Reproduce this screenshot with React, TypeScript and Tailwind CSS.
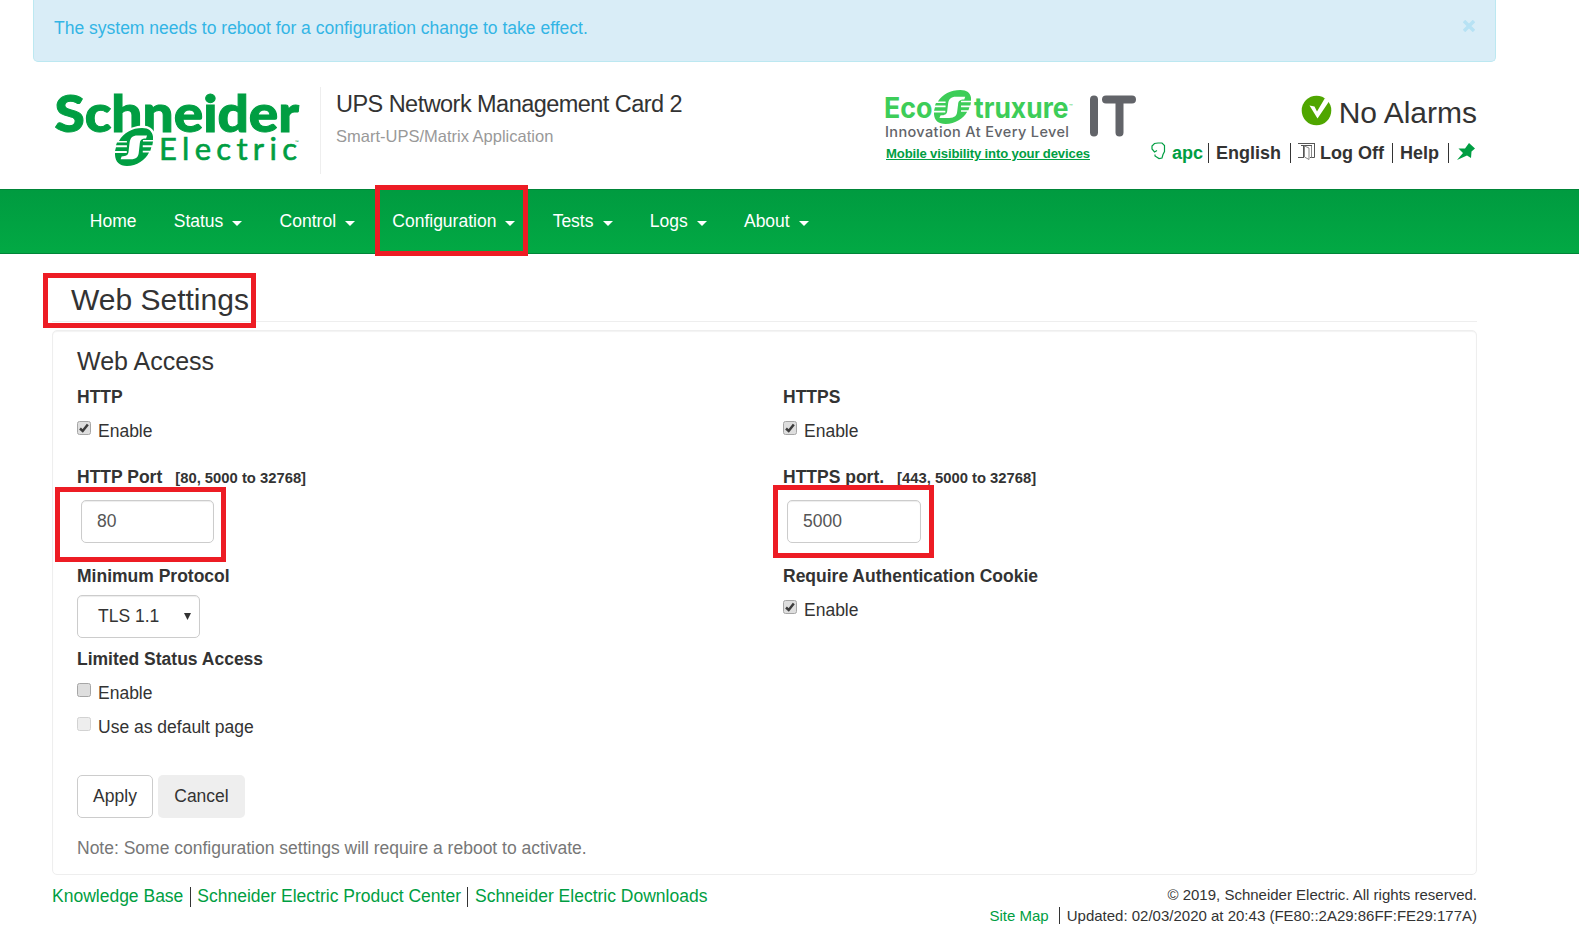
import React from 'react';

function Emblem({ x, y, w, h, color }: { x: number; y: number; w: number; h: number; color: string }) {
  return (
    <svg x={x} y={y} width={w} height={h} viewBox="0 0 115 112" preserveAspectRatio="none">
      <path
        fill={color}
        d="M12 38H40V43H6L3 51H38V57H3L0 68H36V74H0C-1 98 12 112 36 112C66 112 92 94 103 72H78V67H107L110 57H80V51H113L115 40H84V35H115C117 14 106 0 82 0C52 0 26 14 12 38Z"
      />
      <rect x="36" y="30" width="48" height="52" fill={color} />
      <path fill="#fff" d="M97 22H68C53 22 46 29 44 44L41 70C40 80 34 83 20 84L17 92H47C65 92 71 84 72 72L75 46C76 36 80 31 94 31Z" />
    </svg>
  );
}

function BrandLogo() {
  return (
    <svg width="248" height="78" viewBox="54 90 248 78" className="block shrink-0 overflow-visible" fontFamily="Lato, sans-serif">
      <text x="54.500" y="131.500" fontSize="51.500" fontWeight="900" fill="#009e42" stroke="#009e42" strokeWidth="1" textLength="244.500" lengthAdjust="spacingAndGlyphs">Schneider</text>
      <path d="M113 143C118 134 130 126 142 125.500C150 125.500 156 130 156 140L150 160H120Z" fill="#fff" />
      <Emblem x={115} y={128} w={38} h={38} color="#009e42" />
      <text x="159" y="160" fontSize="31" fill="#009e42" stroke="#009e42" strokeWidth="0.6" textLength="138" lengthAdjust="spacing">Electric</text>
      <text x="295" y="144" fontSize="5" fill="#009e42">™</text>
    </svg>
  );
}

function EcoLogo() {
  return (
    <svg width="252" height="52" viewBox="885 88 252 52" className="block overflow-visible" fontFamily="Inter, sans-serif">
      <g fill="#3dcd58" fontWeight="700" fontSize="28">
        <text x="884" y="117.500" textLength="48.500" lengthAdjust="spacingAndGlyphs">Eco</text>
        <text x="974" y="117.500" textLength="94.500" lengthAdjust="spacingAndGlyphs">truxure</text>
      </g>
      <text x="1069" y="109" fontSize="6" fill="#3dcd58">™</text>
      <Emblem x={934} y={90} w={37} h={34} color="#3dcd58" />
      <text x="885" y="137" fontSize="14.500" fontWeight="500" fill="#626469" textLength="184">Innovation At Every Level</text>
      <path d="M1094 99.500V132.500M1106 99.500H1132M1119.500 99.500V132.500" stroke="#626469" strokeWidth="8" strokeLinecap="round" fill="none" />
    </svg>
  );
}

function Box({ className = '' }: { className?: string }) {
  return <div className={'pointer-events-none absolute border-5 border-[#ed1c24] ' + className} />;
}

function Check({ label, checked, disabled }: { label: string; checked?: boolean; disabled?: boolean }) {
  return (
    <label className="flex h-[25px] items-center gap-[7px]">
      <svg width="14" height="14" viewBox="0 0 14 14" className={disabled ? '-mt-2 opacity-50' : '-mt-2'}>
        <rect x="0.5" y="0.5" width="13" height="13" rx="2" fill="#dedede" stroke="#a6a6a6" />
        {checked && <path d="M3 7.500L5.700 10L10.800 3.500" fill="none" stroke="#3c3c3c" strokeWidth="2.500" />}
      </svg>
      <span>{label}</span>
    </label>
  );
}

const Caret = () => <span className="mt-[3px] ml-[9px] border-x-5 border-t-5 border-x-transparent border-t-white" />;
const Bar = () => <span className="h-5 w-px bg-[#333]" />;

const menu = [
  { label: 'Home', drop: false },
  { label: 'Status', drop: true },
  { label: 'Control', drop: true },
  { label: 'Configuration', drop: true },
  { label: 'Tests', drop: true },
  { label: 'Logs', drop: true },
  { label: 'About', drop: true },
];

const field = 'flex h-[43px] items-center rounded-[5px] border border-[#ccc] bg-white px-[15px] text-[#555] shadow-[inset_0_1px_1px_rgba(0,0,0,0.075)]';

export default function App() {
  return (
    <div className="relative flex h-[935px] w-[1579px] flex-col overflow-hidden bg-white font-['Liberation_Sans',Arial,sans-serif] text-[17.5px] leading-[25px] text-[#333]">
      <div className="mr-[83px] ml-[33px] flex h-[62px] shrink-0 justify-between rounded-b-[5px] border border-t-0 border-[#bce8f1] bg-[#d9edf7] pt-4 pr-5 pl-5 text-[#33b5e5]">
        <span>The system needs to reboot for a configuration change to take effect.</span>
        <svg width="12" height="12" viewBox="0 0 12 12" className="mt-1" stroke="#b7e2f4" strokeWidth="3.500">
          <path d="M1 1L11 11M11 1L1 11" />
        </svg>
      </div>

      <header className="flex h-[127px] shrink-0 items-start pl-[54px]">
        <div className="mt-7"><BrandLogo /></div>
        <div className="mt-[25px] ml-[18px] h-[87px] w-px bg-[#eee]" />
        <div className="mt-[27px] ml-[15px] w-[549px]">
          <div className="text-[23.5px] leading-[30px] tracking-[-0.54px]">UPS Network Management Card 2</div>
          <div className="mt-[5px] text-[16.5px] leading-[24px] text-[#999]">Smart-UPS/Matrix Application</div>
        </div>
        <div className="mt-[26px] w-[252px]">
          <EcoLogo />
          <div className="mt-1 ml-px text-[13.1px] leading-[20px] font-bold tracking-[-0.14px] text-[#009e42] underline">Mobile visibility into your devices</div>
        </div>
        <div className="ml-[14px] w-[327px]">
          <div className="mt-[32px] mr-px flex h-9 items-center justify-end gap-[7px] text-[30px]">
            <svg width="31" height="31" viewBox="0 0 31 31" className="-mt-1">
              <circle cx="15.500" cy="15.500" r="14.800" fill="#4fa600" />
              <path d="M8.500 10.500L13.500 11.500L16 16.500L24 3L29 5L16.500 23.500Z" fill="#fff" />
            </svg>
            <span>No Alarms</span>
          </div>
          <div className="mt-[11px] flex h-6 items-center text-[18px] font-bold">
            <svg width="15" height="18" viewBox="0 0 15 18" className="-mt-1" fill="none" stroke="#009e42" strokeWidth="1.200">
              <path d="M6 8.500L3.500 10L1 7V4L3.500 1.500L7 1L11 1L13.500 3.500V9.500L12 12.500L11 16L8 16.500L4 14V12.500" />
            </svg>
            <span className="ml-[6px] text-[#009e42]">apc</span>
            <span className="ml-[5px] h-5 w-px bg-[#333]" />
            <span className="ml-[7px]">English</span>
            <span className="ml-[9px] h-5 w-px bg-[#333]" />
            <svg width="18" height="17" viewBox="0 0 18 17" className="-mt-1 ml-[7px]" fill="none" stroke="#555">
              <path d="M0 0.500H17M3 2.500H14M16.500 1V14.500H12M0 14.500H6M5.500 3V14.500" />
              <path d="M6.500 3L11 5V16.500L6.500 14ZM13.500 3V14.500" stroke="#888" />
            </svg>
            <span className="ml-[4px]">Log Off</span>
            <span className="ml-[8px] h-5 w-px bg-[#333]" />
            <span className="ml-[7px]">Help</span>
            <span className="ml-[9px] h-5 w-px bg-[#333]" />
            <svg width="18" height="17" viewBox="0 0 18 17" className="-mt-1 ml-[8px]" fill="#009e42">
              <path d="M12 0L18 5.500L14.500 8.500L14 15L10 12.500L0 17L6 10L1.500 5.500L8 5.500Z" />
            </svg>
          </div>
        </div>
      </header>

      <nav className="flex h-[65px] shrink-0 items-center gap-[37.25px] border-y border-[#008538] bg-linear-to-b from-[#009b40] to-[#02a944] pl-[89.800px] text-white">
        {menu.map((m) => (
          <span key={m.label} className="relative flex items-center">
            {m.label}
            {m.drop && <Caret />}
            {m.label === 'Configuration' && <Box className="-top-[24px] -left-[17px] h-[71px] w-[153px]" />}
          </span>
        ))}
      </nav>

      <main className="mx-[52px] w-[1425px]">
        <div className="relative h-[68px] border-b border-[#eee] pt-[26px] pl-[19px] text-[30px] leading-[40px]">
          Web Settings
          <Box className="top-[19px] -left-[9px] h-[55px] w-[213px]" />
        </div>
        <section className="mt-[8px] h-[545px] rounded-[5px] border border-[#eee] px-[24px] pt-[13px] shadow-[inset_0_1px_1px_rgba(0,0,0,0.05)]">
          <h2 className="text-[25px] leading-[34px]">Web Access</h2>
          <div className="flex">
            <div className="w-[706px]">
              <div className="mt-[7px] font-bold">HTTP</div>
              <div className="mt-[9px]"><Check label="Enable" checked /></div>
              <div className="mt-[21px] flex font-bold">HTTP Port<span className="mt-px -mb-px ml-[13px] text-[14.800px]">[80, 5000 to 32768]</span></div>
              <div className="relative mt-[10px] ml-1 w-[133px]">
                <div className={field}>80</div>
                <Box className="-top-[13px] -left-[26px] h-[75px] w-[171px]" />
              </div>
              <div className="mt-[21px] font-bold">Minimum Protocol</div>
              <div className="mt-[6px] flex h-[43px] w-[123px] items-center justify-between rounded-[5px] border border-[#ccc] pr-[8px] pl-[20px] shadow-[inset_0_1px_1px_rgba(0,0,0,0.075)]">
                TLS 1.1
                <svg width="7" height="7" viewBox="0 0 7 7"><path d="M0 0H7L3.500 7Z" fill="#333" /></svg>
              </div>
              <div className="mt-[9px] font-bold">Limited Status Access</div>
              <div className="mt-[9px]"><Check label="Enable" /></div>
              <div className="mt-[9px]"><Check label="Use as default page" disabled /></div>
              <div className="mt-[35px] flex gap-[5px]">
                <button className="h-[43px] w-[76px] rounded-[5px] border border-[#ccc]">Apply</button>
                <button className="h-[43px] w-[87px] rounded-[5px] bg-[#eee]">Cancel</button>
              </div>
              <div className="mt-[18px] text-[#777]">Note: Some configuration settings will require a reboot to activate.</div>
            </div>
            <div>
              <div className="mt-[7px] font-bold">HTTPS</div>
              <div className="mt-[9px]"><Check label="Enable" checked /></div>
              <div className="mt-[21px] flex font-bold">HTTPS port.<span className="mt-px -mb-px ml-[13px] text-[14.800px]">[443, 5000 to 32768]</span></div>
              <div className="relative mt-[10px] ml-1 w-[134px]">
                <div className={field}>5000</div>
                <Box className="-top-[15px] -left-[14px] h-[73px] w-[161px]" />
              </div>
              <div className="mt-[21px] font-bold">Require Authentication Cookie</div>
              <div className="mt-[9px]"><Check label="Enable" checked /></div>
            </div>
          </div>
        </section>
        <footer className="mt-[9px] flex justify-between">
          <div className="flex h-[25px] items-center gap-[6.5px] text-[#009e42]">
            <span>Knowledge Base</span><Bar />
            <span>Schneider Electric Product Center</span><Bar />
            <span>Schneider Electric Downloads</span>
          </div>
          <div className="text-right text-[15px] leading-[21px]">
            <div>© 2019, Schneider Electric. All rights reserved.</div>
            <div className="flex items-center justify-end">
              <span className="text-[#009e42]">Site Map</span>
              <span className="mr-[7px] ml-[10px] h-[17px] w-px bg-[#333]" />
              <span>Updated: 02/03/2020 at 20:43 (FE80::2A29:86FF:FE29:177A)</span>
            </div>
          </div>
        </footer>
      </main>
    </div>
  );
}
